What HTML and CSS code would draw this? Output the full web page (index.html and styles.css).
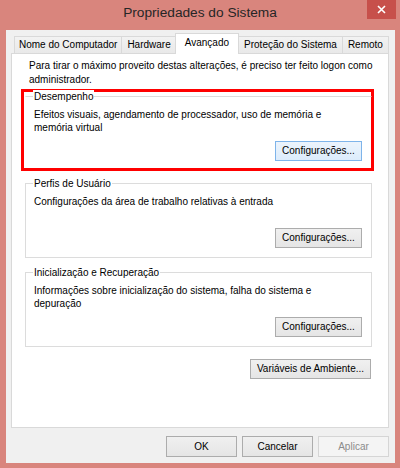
FILE: index.html
```html
<!DOCTYPE html>
<html lang="pt-BR">
<head>
<meta charset="utf-8">
<title>Propriedades do Sistema</title>
<link rel="stylesheet" href="styles.css">
</head>
<body>
<div class="window">
  <div class="titlebar">
    <div></div>
    <div class="title">Propriedades do Sistema</div>
    <div class="close">
      <svg width="9" height="9" viewBox="0 0 9 9"><path d="M1 1 L8 8 M8 1 L1 8" stroke="#fff" stroke-width="1.6" fill="none"/></svg>
    </div>
  </div>
  <div class="client">
    <div class="tabs">
      <div class="tab tab-first">Nome do Computador</div>
      <div class="tab">Hardware</div>
      <div class="tab active">Avançado</div>
      <div class="tab">Proteção do Sistema</div>
      <div class="tab">Remoto</div>
    </div>
    <div class="panel">
      <p class="intro">Para tirar o máximo proveito destas alterações, é preciso ter feito logon como<br>administrador.</p>
      <div class="highlight">
        <div class="group group-first">
          <span class="legend">Desempenho</span>
          <p class="desc">Efeitos visuais, agendamento de processador, uso de memória e<br>memória virtual</p>
          <div class="btnrow"><button class="btn btn-hover">Configurações...</button></div>
        </div>
      </div>
      <div class="group group-second">
        <span class="legend">Perfis de Usuário</span>
        <p class="desc">Configurações da área de trabalho relativas à entrada</p>
        <div class="btnrow"><button class="btn">Configurações...</button></div>
      </div>
      <div class="group group-third">
        <span class="legend">Inicialização e Recuperação</span>
        <p class="desc">Informações sobre inicialização do sistema, falha do sistema e<br>depuração</p>
        <div class="btnrow"><button class="btn">Configurações...</button></div>
      </div>
      <div class="envrow"><button class="btn btn-env">Variáveis de Ambiente...</button></div>
    </div>
    <div class="footer">
      <button class="btn btn-foot">OK</button>
      <button class="btn btn-foot">Cancelar</button>
      <button class="btn btn-foot" disabled>Aplicar</button>
    </div>
  </div>
</div>
</body>
</html>
```
FILE: styles.css
```css
* { box-sizing: border-box; }

html, body {
  margin: 0;
  padding: 0;
  background: #d9857d;
}

body {
  font-family: "Liberation Sans", Arial, sans-serif;
  font-size: 10px;
  color: #000;
}

.window {
  width: 400px;
  height: 468px;
  background: #d9857d;
  display: flex;
  flex-direction: column;
}

.titlebar {
  height: 30px;
  display: grid;
  grid-template-columns: 1fr auto 1fr;
  flex: none;
}

.title {
  font-size: 13.7px;
  color: #262626;
  line-height: 18px;
  padding-top: 4px;
  align-self: start;
}

.close {
  justify-self: end;
  align-self: start;
  width: 29px;
  height: 19px;
  margin-right: 4px;
  background: #c7504b;
  display: flex;
  align-items: center;
  justify-content: center;
}

.close svg { display: block; }

.client {
  flex: 1;
  margin: 0 5px 5px 6px;
  background: #f0f0f0;
  padding: 3px 6px 0 5px;
  display: flex;
  flex-direction: column;
}

.tabs {
  display: flex;
  align-items: flex-end;
  height: 20px;
  padding-left: 3px;
  position: relative;
  z-index: 1;
}

.tab {
  height: 17px;
  line-height: 15px;
  padding: 0 5px;
  border: 1px solid #d9d9d9;
  border-bottom: none;
  background: linear-gradient(#f2f2f2, #e9e9e9);
  margin-right: -1px;
  white-space: nowrap;
}

.tab-first { padding: 0 4px; }

.tab.active {
  height: 21px;
  margin: 0 -1px -1px -1px;
  padding: 0 9px;
  background: #fff;
  line-height: 17px;
  position: relative;
  z-index: 2;
}

.panel {
  height: 375px;
  background: #fff;
  border: 1px solid #d9d9d9;
  display: flex;
  flex-direction: column;
  padding: 0;
}

.intro {
  margin: 5px 0 0 17px;
  line-height: 14px;
}

.highlight {
  margin: 2px 0 0 9px;
  width: 353px;
  height: 82px;
  border: 3px solid #ff0000;
}

.group {
  width: 347px;
  height: 75px;
  border: 1px solid #dcdcdc;
  display: flex;
  flex-direction: column;
  padding: 0 9px 9px 8px;
}

.group-first {
  margin: 4px 0 0 1px;
  border-left-color: transparent;
  border-right-color: transparent;
  border-bottom-color: transparent;
}

.group-second { margin: 12px 0 0 13px; }
.group-third { margin: 14px 0 0 13px; }

.legend {
  align-self: flex-start;
  margin-top: -7px;
  line-height: 13px;
  padding: 0 1px;
  margin-left: -1px;
  background: #fff;
}

.desc {
  margin: 5px 0 0 0;
  line-height: 13px;
}

.btnrow {
  margin-top: auto;
  display: flex;
  justify-content: flex-end;
}

.btn {
  font-family: inherit;
  font-size: 10px;
  color: #000;
  height: 20px;
  width: 87px;
  padding: 0;
  line-height: 18px;
  border: 1px solid #acacac;
  background: linear-gradient(#f0f0f0, #e5e5e5);
  border-radius: 0;
}

.btn-hover {
  border-color: #7eb4ea;
  background: linear-gradient(#ecf4fc, #dcecfc);
}

.envrow {
  display: flex;
  justify-content: flex-end;
  margin: 12px 17px 0 0;
}

.btn-env { width: 121px; }

.footer {
  display: flex;
  justify-content: flex-end;
  gap: 5px;
  margin-top: 8px;
  padding-right: 0;
}

.btn-foot {
  width: 71px;
  height: 21px;
}

.btn[disabled] {
  color: #8b8b8b;
  border-color: #d5d5d5;
  background: #f4f4f4;
}
```
